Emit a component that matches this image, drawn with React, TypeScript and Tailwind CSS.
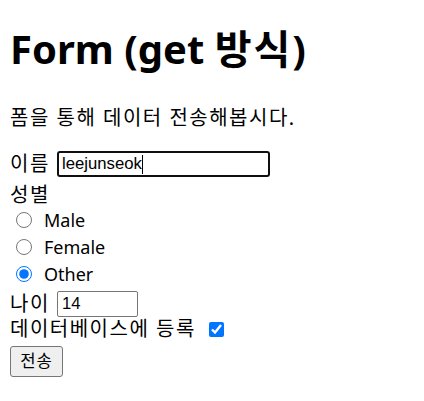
export default function App() {
  const font = { fontFamily: '"Noto Sans", "Noto Sans CJK KR", sans-serif' };
  return (
    <div className="min-h-screen bg-white px-[10px] text-black text-[20px]" style={font}>
      <h1 className="pt-[24px] h-[74px] text-[40px] font-bold leading-[50px] whitespace-nowrap">
        Form (get <span className="tracking-[2px]">방식</span>)
      </h1>

      <p className="mt-[30px] h-[28px] leading-[28px] whitespace-nowrap tracking-[1.5px]">폼을 통해 데이터 전송해봅시다.</p>

      <form className="mt-[19px]" onSubmit={(e) => e.preventDefault()}>
        {/* 이름 */}
        <div className="flex items-center h-[26px]">
          <span className="w-[47px] leading-[22px] tracking-[1.5px]">이름</span>
          <div className="flex items-center w-[213px] h-[26px] border-2 border-[#101010] rounded-[3px] px-[3px] font-['Liberation_Sans',Arial,sans-serif] text-[16.7px]">
            <span>leejunseok</span>
            <span className="inline-block w-px h-[19px] bg-black"></span>
          </div>
        </div>

        {/* 성별 */}
        <div className="flex items-center h-[26px] mt-[5px] leading-[22px] tracking-[1.5px]">성별</div>

        {[
          { label: 'Male', checked: false, mt: 'mt-0' },
          { label: 'Female', checked: false, mt: 'mt-[3px]' },
          { label: 'Other', checked: true, mt: 'mt-[3px]' },
        ].map((r) => (
          <label key={r.label} className={`flex items-center h-[24px] ${r.mt}`}>
            <input
              type="radio"
              name="gender"
              defaultChecked={r.checked}
              className="ml-[6px] mr-[12px] w-[16px] h-[16px] m-0"
            />
            <span className="text-[18px] leading-[22px]">{r.label}</span>
          </label>
        ))}

        {/* 나이 */}
        <div className="flex items-center h-[26px] mt-[5px]">
          <span className="w-[47px] leading-[20px] tracking-[1.5px]">나이</span>
          <div className="flex items-center w-[81px] h-[26px] border border-[#767676] rounded-[2px] px-[4px] font-['Liberation_Sans',Arial,sans-serif] text-[16.7px]">
            14
          </div>
        </div>

        {/* 데이터베이스 */}
        <label className="flex items-center h-[22px] mt-[1px]">
          <span className="leading-[20px] tracking-[1.5px]">데이터베이스에 등록</span>
          <input type="checkbox" defaultChecked className="ml-[13px] w-[15px] h-[15px]" />
        </label>

        <button
          type="submit"
          className="mt-[6px] w-[53px] h-[31px] bg-[#efefef] border border-[#767676] rounded-[3px] text-[16.7px] leading-none tracking-[1px]"
        >
          전송
        </button>
      </form>
    </div>
  );
}
